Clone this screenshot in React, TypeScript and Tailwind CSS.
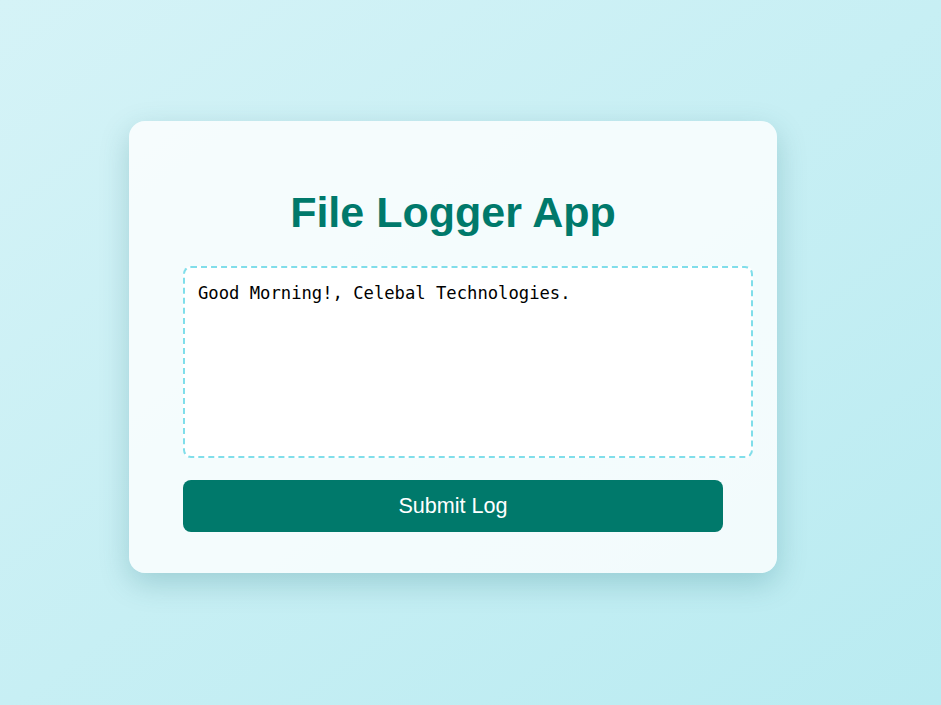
import React, { useState } from 'react';

function App() {
  const [log, setLog] = useState('Good Morning!, Celebal Technologies.');

  return (
    <div className="min-h-screen w-full bg-gradient-to-br from-[#d5f3f7] to-[#b9ebf1] pl-[129px] pt-[121px] font-['Liberation_Sans',Arial,sans-serif]">
      {/* Card */}
      <div className="w-[648px] rounded-2xl bg-white/80 px-[54px] pt-[67px] pb-[41px] shadow-[0_10px_30px_rgba(0,90,100,0.22)]">
        <h1 className="text-center text-[43px] font-bold leading-[49px] text-[#00796b]">
          File Logger App
        </h1>

        <textarea
          value={log}
          onChange={(e) => setLog(e.target.value)}
          className="mt-[29px] block h-[192px] w-[570px] resize-none rounded-lg border-2 border-dashed border-[#80deea] bg-white px-[13px] pt-[14px] pb-[13px] font-['DejaVu_Sans_Mono',monospace] text-[17.2px] leading-[22px] text-black outline-none"
        />

        <button className="mt-[22px] block h-[52px] w-full rounded-lg bg-[#00796b] text-[21.6px] text-white">
          Submit Log
        </button>
      </div>
    </div>
  );
}

export default App;
